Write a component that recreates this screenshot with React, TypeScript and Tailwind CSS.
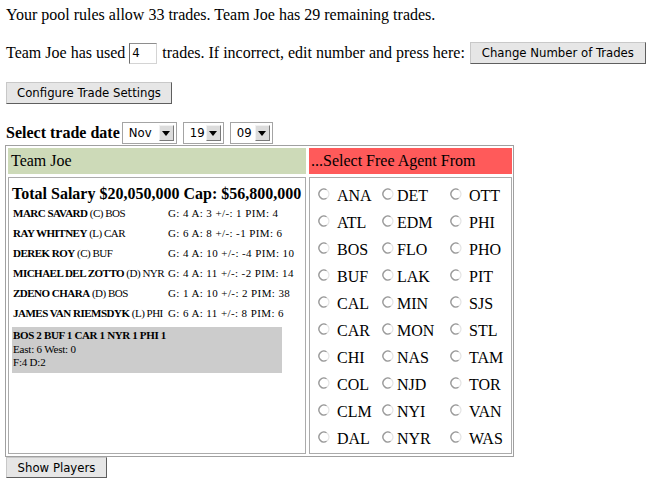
const players = [
  { name: 'MARC SAVARD', pos: '(C) BOS', stats: 'G: 4 A: 3 +/-: 1 PIM: 4' },
  { name: 'RAY WHITNEY', pos: '(L) CAR', stats: 'G: 6 A: 8 +/-: -1 PIM: 6' },
  { name: 'DEREK ROY', pos: '(C) BUF', stats: 'G: 4 A: 10 +/-: -4 PIM: 10' },
  { name: 'MICHAEL DEL ZOTTO', pos: '(D) NYR', stats: 'G: 4 A: 11 +/-: -2 PIM: 14' },
  { name: 'ZDENO CHARA', pos: '(D) BOS', stats: 'G: 1 A: 10 +/-: 2 PIM: 38' },
  { name: 'JAMES VAN RIEMSDYK', pos: '(L) PHI', stats: 'G: 6 A: 11 +/-: 8 PIM: 6' },
]

const teams = [
  ['ANA', 'DET', 'OTT'],
  ['ATL', 'EDM', 'PHI'],
  ['BOS', 'FLO', 'PHO'],
  ['BUF', 'LAK', 'PIT'],
  ['CAL', 'MIN', 'SJS'],
  ['CAR', 'MON', 'STL'],
  ['CHI', 'NAS', 'TAM'],
  ['COL', 'NJD', 'TOR'],
  ['CLM', 'NYI', 'VAN'],
  ['DAL', 'NYR', 'WAS'],
]

const serif = { fontFamily: '"Liberation Serif", "Times New Roman", serif' }
const ui = { fontFamily: '"DejaVu Sans Condensed", "DejaVu Sans", sans-serif' }

function OldButton({ label, className }: { label: string; className: string }) {
  return (
    <button
      style={ui}
      className={`flex items-center justify-center bg-[#e6e6e6] border border-[#c8c8c8] border-r-[#5e5e5e] border-b-[#5e5e5e] text-[13px] text-black [font-stretch:condensed] ${className}`}
    >
      {label}
    </button>
  )
}

function OldSelect({ value, width }: { value: string; width: string }) {
  return (
    <div
      style={ui}
      className={`flex items-center justify-between h-[22px] bg-white border border-[#a4a4a4] pl-[6px] pr-[2px] text-[13px] [font-stretch:condensed] ${width}`}
    >
      <span>{value}</span>
      <span className="flex items-center justify-center w-[15px] h-[16px] bg-[#dcdcdc] border border-[#f2f2f2] border-r-[#7a7a7a] border-b-[#7a7a7a]">
        <svg width="8" height="5" viewBox="0 0 8 5">
          <path d="M0 0 H8 L4 5 Z" fill="#000" />
        </svg>
      </span>
    </div>
  )
}

function Radio() {
  return (
    <svg width="12" height="12" viewBox="0 0 12 12" className="mt-[6px] shrink-0">
      <circle cx="6" cy="6" r="5" fill="#fff" stroke="#e4e4e4" strokeWidth="1.2" />
      <path d="M8.5 1.7 A5 5 0 1 0 8.5 10.3" fill="none" stroke="#9a9a9a" strokeWidth="1.3" />
    </svg>
  )
}

export default function App() {
  const textMargins = ['ml-[7px]', 'ml-[3px]', 'ml-[7px]']
  return (
    <div style={serif} className="min-h-screen bg-white text-black pt-[6px] pl-[6px] text-[16px]">
      <div className="leading-[18px]">Your pool rules allow 33 trades. Team Joe has 29 remaining trades.</div>

      <div className="mt-[17px] flex items-center h-[24px]">
        <span>Team Joe has used</span>
        <div
          style={ui}
          className="ml-[4px] w-[28px] h-[21px] flex items-center pl-[2px] text-[13px] bg-white border border-[#d4d4d4] border-l-[#6e6e6e] border-t-[#8e8e8e]"
        >
          4
        </div>
        <span className="ml-[5px]">trades. If incorrect, edit number and press here:</span>
        <OldButton label="Change Number of Trades" className="ml-[5px] w-[176px] h-[22px]" />
      </div>

      <OldButton label="Configure Trade Settings" className="mt-[17px] w-[166px] h-[22px]" />

      <div className="mt-[17px] flex items-center h-[24px]">
        <span className="font-bold">Select trade date</span>
        <div className="ml-[2px] flex items-center gap-[6px]">
          <OldSelect value="Nov" width="w-[55px]" />
          <OldSelect value="19" width="w-[41px]" />
          <OldSelect value="09" width="w-[43px]" />
        </div>
      </div>

      <div className="ml-[-1px] w-[509px] border border-[#a0a0a0] pt-[2px] pl-[2px] pr-[1px] pb-[2px] grid grid-cols-[298px_203px] gap-[3px]">
        <div className="h-[26px] leading-[26px] pl-[3px] bg-[#cddab8]">Team Joe</div>
        <div className="h-[26px] leading-[26px] pl-[2px] bg-[#ff5a5a]">...Select Free Agent From</div>

        <div className="h-[277px] border border-[#ababab] pl-[3px] pt-[6px]">
          <div className="font-bold leading-[19px]">Total Salary $20,050,000 Cap: $56,800,000</div>
          <div className="w-[270px] text-[11px]">
            {players.map((p) => (
              <div key={p.name} className="grid grid-cols-[155px_1fr] h-[20px] items-center pl-[1px]">
                <span className="whitespace-nowrap tracking-[-0.5px]">
                  <b>{p.name}</b> {p.pos}
                </span>
                <span className="whitespace-nowrap tracking-[0.4px]">{p.stats}</span>
              </div>
            ))}
            <div className="mt-[4px] bg-[#cccccc] pt-[2px] pb-[3px] pl-[1px] leading-[13.5px]">
              <div className="font-bold tracking-[-0.35px]">BOS 2 BUF 1 CAR 1 NYR 1 PHI 1</div>
              <div className="tracking-[-0.2px]">East: 6 West: 0</div>
              <div className="tracking-[-0.2px]">F:4 D:2</div>
            </div>
          </div>
        </div>

        <div className="h-[277px] border border-[#ababab] pl-[8px] pt-[4px]">
          <div className="grid grid-cols-[64px_68px_1fr]">
            {teams.map((row) =>
              row.map((t, i) => (
                <div key={t} className="flex items-start h-[27px]">
                  <Radio />
                  <span className={`leading-[27px] ${textMargins[i]}`}>{t}</span>
                </div>
              ))
            )}
          </div>
        </div>
      </div>

      <OldButton label="Show Players" className="w-[101px] h-[21px]" />
    </div>
  )
}
